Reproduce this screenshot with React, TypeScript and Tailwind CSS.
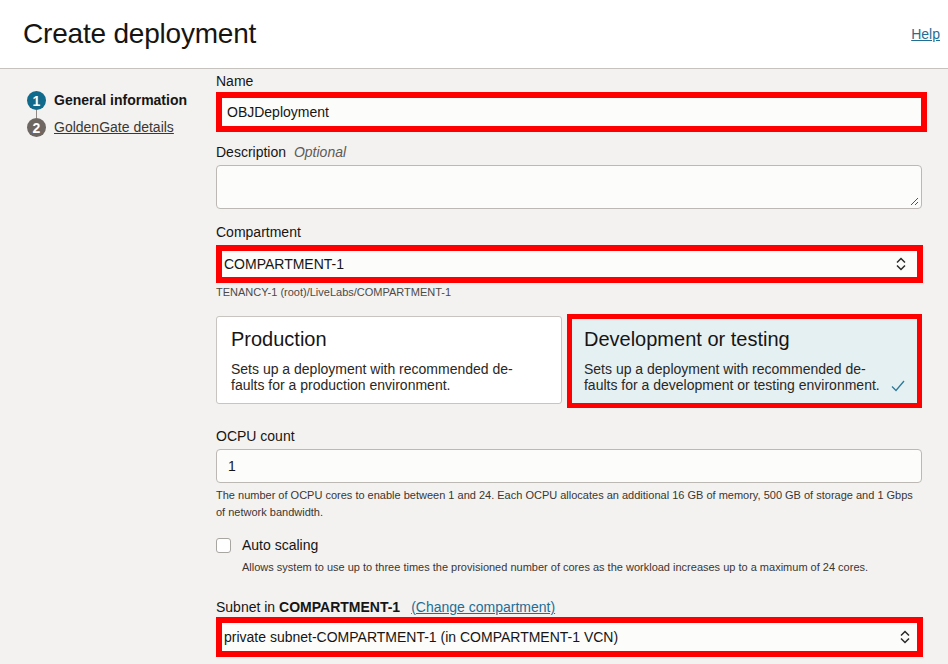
import React from "react";

function UpDown() {
  return (
    <svg width="12" height="16" viewBox="0 0 12 16" fill="none" stroke="#2a2a2a" strokeWidth="1.5">
      <polyline points="2,6.5 6,2.5 10,6.5" />
      <polyline points="2,9.5 6,13.5 10,9.5" />
    </svg>
  );
}

function Label({ children }: { children: React.ReactNode }) {
  return <div className="text-[14px] leading-[16px] text-[#161513]">{children}</div>;
}

export default function App() {
  return (
    <div className="min-h-screen w-full bg-[#f3f2f1] font-['Liberation_Sans',Arial,sans-serif] text-[#161513]">
      <header className="flex h-[69px] items-center justify-between border-b border-[#c6c2be] bg-white pl-[23px] pr-[8px]">
        <h1 className="text-[28px] font-normal leading-[32px] tracking-[-0.2px]">Create deployment</h1>
        <a className="text-[14px] text-[#1f6e93] underline" href="#">
          Help
        </a>
      </header>

      <div className="flex">
        {/* steps */}
        <nav className="w-[216px] shrink-0 pl-[27px] pt-[22px]">
          <div className="flex h-[19px] items-center gap-[8px]">
            <span className="flex h-[19px] w-[19px] items-center justify-center rounded-full bg-[#0f6a8b] text-[14px] font-bold leading-none text-white">
              1
            </span>
            <span className="text-[14px] font-bold">General information</span>
          </div>
          <div className="ml-[9px] h-[8px] w-px bg-[#8f8a85]" />
          <div className="flex h-[19px] items-center gap-[8px]">
            <span className="flex h-[19px] w-[19px] items-center justify-center rounded-full bg-[#6d6661] text-[14px] font-bold leading-none text-white">
              2
            </span>
            <a href="#" className="text-[14px] text-[#3b3733] underline">
              GoldenGate details
            </a>
          </div>
        </nav>

        {/* form */}
        <main className="w-[706px] pt-[4px]">
          <Label>Name</Label>
          <div className="mt-[3px] h-[40px] w-[711px] border-[6px] border-[#ff0000] bg-[#fcfcfb]">
            <div className="flex h-full items-center pl-[5px] text-[14px]">OBJDeployment</div>
          </div>

          <div className="mt-[12px]">
            <Label>
              Description <span className="ml-[4px] italic text-[#5f5a55]">Optional</span>
            </Label>
          </div>
          <div className="relative mt-[5px] h-[44px] w-full rounded-[4px] border border-[#bcb8b4] bg-[#fcfcfb]">
            <svg className="absolute bottom-[2px] right-[2px]" width="9" height="9" viewBox="0 0 9 9" stroke="#555" strokeWidth="1">
              <line x1="1" y1="8" x2="8" y2="1" />
              <line x1="5" y1="8" x2="8" y2="5" />
            </svg>
          </div>

          <div className="mt-[15px]">
            <Label>Compartment</Label>
          </div>
          <div className="mt-[5px] h-[38px] w-[707px] border-[6px] border-[#ff0000] bg-[#fcfcfb]">
            <div className="flex h-full items-center justify-between pl-[2px] pr-[10px] text-[14px]">
              <span>COMPARTMENT-1</span>
              <UpDown />
            </div>
          </div>
          <div className="mt-[2px] text-[11px] leading-[14px] text-[#4d4945]">TENANCY-1 (root)/LiveLabs/COMPARTMENT-1</div>

          <div className="mt-[15px] flex items-start gap-[5px]">
            <div className="mt-[2px] h-[88px] w-[347px] rounded-[3px] border border-[#c8c4c0] bg-white pl-[14px] pt-[11px]">
              <div className="text-[20px] leading-[22px]">Production</div>
              <div className="mt-[11px] text-[14px] leading-[16px] text-[#2a2724]">
                Sets up a deployment with recommended de-
                <br />
                faults for a production environment.
              </div>
            </div>
            <div className="h-[94px] w-[356px] border-[5px] border-[#ff0000] bg-[#e5f0f3] pl-[12px] pr-[12px] pt-[9px]">
              <div className="text-[20px] leading-[22px]">Development or testing</div>
              <div className="mt-[11px] flex items-end justify-between text-[14px] leading-[16px] text-[#2a2724]">
                <span>
                  Sets up a deployment with recommended de-
                  <br />
                  faults for a development or testing environment.
                </span>
                <svg width="14" height="12" viewBox="0 0 14 12" fill="none" stroke="#2b7a99" strokeWidth="1.3" className="mb-[1px]">
                  <polyline points="1,6.5 5,10.5 13,1" />
                </svg>
              </div>
            </div>
          </div>

          <div className="mt-[20px]">
            <Label>OCPU count</Label>
          </div>
          <div className="mt-[5px] flex h-[34px] w-full items-center rounded-[4px] border border-[#bcb8b4] bg-[#fcfcfb] pl-[11px] text-[14px]">
            1
          </div>
          <div className="mt-[4px] text-[11px] leading-[17px] text-[#3a3632]">
            The number of OCPU cores to enable between 1 and 24. Each OCPU allocates an additional 16 GB of memory, 500 GB of storage and 1 Gbps
            <br />
            of network bandwidth.
          </div>

          <div className="mt-[16px] flex items-center gap-[11px]">
            <span className="h-[15px] w-[15px] rounded-[3px] border border-[#a9a5a1] bg-white" />
            <span className="text-[14px] leading-[16px]">Auto scaling</span>
          </div>
          <div className="mt-[7px] pl-[26px] text-[11px] leading-[14px] text-[#3a3632]">
            Allows system to use up to three times the provisioned number of cores as the workload increases up to a maximum of 24 cores.
          </div>

          <div className="mt-[25px] flex items-center">
            <Label>
              Subnet in <span className="font-bold">COMPARTMENT-1</span>
            </Label>
            <a href="#" className="ml-[11px] text-[14px] leading-[16px] text-[#1f6e93] underline">
              (Change compartment)
            </a>
          </div>
          <div className="mt-[2px] h-[40px] w-[707px] border-[6px] border-[#ff0000] bg-[#fcfcfb]">
            <div className="flex h-full items-center justify-between pl-[2px] pr-[6px] text-[14px]">
              <span>private subnet-COMPARTMENT-1 (in COMPARTMENT-1 VCN)</span>
              <UpDown />
            </div>
          </div>
        </main>
      </div>
    </div>
  );
}
